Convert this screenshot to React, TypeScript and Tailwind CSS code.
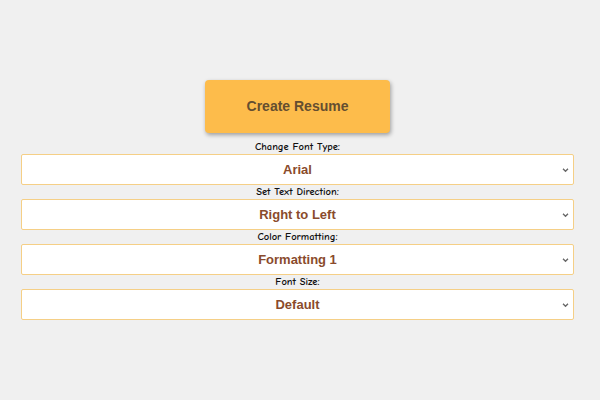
const fields = [
  { label: "Change Font Type:", value: "Arial" },
  { label: "Set Text Direction:", value: "Right to Left" },
  { label: "Color Formatting:", value: "Formatting 1" },
  { label: "Font Size:", value: "Default" },
];

function Chevron() {
  return (
    <svg
      className="pointer-events-none absolute right-[4px] top-1/2 -translate-y-1/2"
      width="7"
      height="5"
      viewBox="0 0 7 5"
    >
      <path d="M1 1.2 L3.5 3.8 L6 1.2" fill="none" stroke="#666" strokeWidth="1.3" />
    </svg>
  );
}

export default function App() {
  return (
    <div className="w-[600px] h-[400px] bg-[#f0f0f0] flex flex-col items-center pt-[80px] pl-[21px] pr-[26px]">
      <button className="w-[185px] h-[53px] rounded-[4px] bg-[#fdbc4b] shadow-[1px_2px_4px_rgba(0,0,0,0.35)] text-[14px] font-bold text-[#654e30] font-['Liberation_Sans',Arial,sans-serif]">
        Create Resume
      </button>
      <div className="w-full flex flex-col mt-[7px]">
        {fields.map((f) => (
          <div key={f.label} className="flex flex-col items-center">
            <label className="h-[14px] leading-[14px] text-[10.5px] font-semibold text-[#111] font-['Comic_Sans_MS','Comic_Neue',cursive]">
              {f.label}
            </label>
            <div className="relative w-full h-[31px] bg-white border border-[#f5cf86] rounded-[2px]">
              <select
                defaultValue={f.value}
                className="appearance-none w-full h-full bg-transparent text-center [text-align-last:center] text-[13px] font-bold text-[#8a4b2c] font-['Liberation_Sans',Arial,sans-serif] outline-none"
              >
                <option>{f.value}</option>
              </select>
              <Chevron />
            </div>
          </div>
        ))}
      </div>
    </div>
  );
}
